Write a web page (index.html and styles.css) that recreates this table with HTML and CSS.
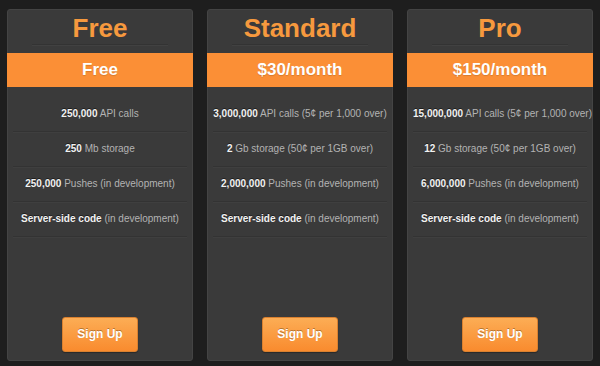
FILE: index.html
```html
<!DOCTYPE html>
<html>
<head>
<meta charset="utf-8">
<link rel="stylesheet" href="styles.css">
</head>
<body>
<div class="plans">
  <div class="plan">
    <div class="plan-name">Free</div>
    <div class="plan-price">Free</div>
    <ul class="features">
      <li><b>250,000</b> API calls</li>
      <li><b>250</b> Mb storage</li>
      <li><b>250,000</b> Pushes (in development)</li>
      <li><b>Server-side code</b> (in development)</li>
    </ul>
    <a class="signup">Sign Up</a>
  </div>
  <div class="plan">
    <div class="plan-name">Standard</div>
    <div class="plan-price">$30/month</div>
    <ul class="features">
      <li><b>3,000,000</b> API calls (5¢ per 1,000 over)</li>
      <li><b>2</b> Gb storage (50¢ per 1GB over)</li>
      <li><b>2,000,000</b> Pushes (in development)</li>
      <li><b>Server-side code</b> (in development)</li>
    </ul>
    <a class="signup">Sign Up</a>
  </div>
  <div class="plan">
    <div class="plan-name">Pro</div>
    <div class="plan-price">$150/month</div>
    <ul class="features">
      <li><b>15,000,000</b> API calls (5¢ per 1,000 over)</li>
      <li><b>12</b> Gb storage (50¢ per 1GB over)</li>
      <li><b>6,000,000</b> Pushes (in development)</li>
      <li><b>Server-side code</b> (in development)</li>
    </ul>
    <a class="signup">Sign Up</a>
  </div>
</div>
</body>
</html>
```
FILE: styles.css
```css
html, body {
  margin: 0;
  padding: 0;
}
body {
  background: #1e1e1e;
  font-family: "Liberation Sans", Arial, sans-serif;
  width: 600px;
  height: 366px;
  overflow: hidden;
}
.plans {
  display: flex;
  gap: 14px;
  padding: 9px 0 0 7px;
}
.plan {
  box-sizing: border-box;
  width: 186px;
  height: 352px;
  background: #3a3a3a;
  border: 1px solid #444;
  border-radius: 3px;
  display: flex;
  flex-direction: column;
  align-items: center;
  padding-bottom: 8px;
}
.plan-name {
  box-sizing: border-box;
  width: 136px;
  height: 35px;
  padding-top: 3px;
  text-align: center;
  color: #f6993e;
  font-size: 26px;
  font-weight: bold;
  line-height: 30px;
  border-bottom: 1px solid #333;
  box-shadow: 0 1px 0 #414141;
}
.plan-price {
  align-self: stretch;
  margin: 8px -1px 0;
  height: 34px;
  background: #fb8f36;
  color: #fff;
  font-size: 17px;
  font-weight: bold;
  line-height: 34px;
  text-align: center;
  text-shadow: 0 1px 1px rgba(0,0,0,0.15);
}
.features {
  list-style: none;
  margin: 10px 0 0;
  padding: 0;
  width: 174px;
}
.features li {
  height: 34px;
  line-height: 34px;
  border-bottom: 1px solid #333;
  box-shadow: 0 1px 0 #3f3f3f;
  text-align: center;
  font-size: 10px;
  color: #b3b3b3;
  white-space: nowrap;
}
.features b {
  color: #f2f2f2;
  text-shadow: 0 -1px 0 rgba(0,0,0,0.5);
}
.signup {
  margin-top: auto;
  box-sizing: border-box;
  width: 76px;
  height: 35px;
  border: 1px solid #d9802f;
  border-radius: 3px;
  background: linear-gradient(#fcad55, #f98b2e);
  color: #fff;
  font-size: 12px;
  font-weight: bold;
  line-height: 33px;
  text-align: center;
  text-shadow: 0 -1px 0 rgba(0,0,0,0.3);
  box-shadow: 0 1px 1px rgba(0,0,0,0.3);
}
```
